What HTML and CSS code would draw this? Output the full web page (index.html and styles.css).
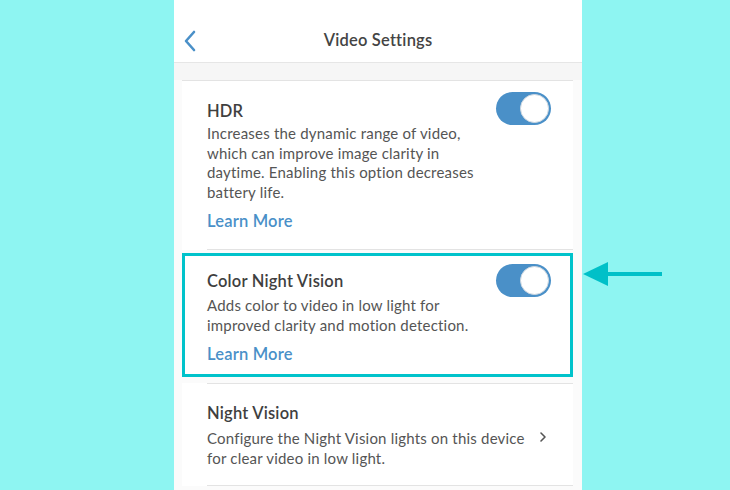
FILE: index.html
```html
<!DOCTYPE html>
<html>
<head>
<meta charset="utf-8">
<link rel="stylesheet" href="styles.css">
</head>
<body>
<div class="stage">
  <div class="panel">
    <div class="header">
      <svg class="back" width="14" height="22" viewBox="0 0 14 22"><path d="M11 2 L3 11 L11 20" fill="none" stroke="#4a90c8" stroke-width="2.6" stroke-linecap="round" stroke-linejoin="round"/></svg>
      <div class="title">Video Settings</div>
    </div>
    <div class="band"></div>
    <div class="item first">
      <div class="text">
        <div class="name">HDR</div>
        <div class="desc">Increases the dynamic range of video, which can improve image clarity in daytime. Enabling this option decreases battery life.</div>
        <div class="link">Learn More</div>
      </div>
      <div class="toggle"><div class="knob"></div></div>
    </div>
    <div class="item boxed">
      <div class="text">
        <div class="name">Color Night Vision</div>
        <div class="desc">Adds color to video in low light for improved clarity and motion detection.</div>
        <div class="link">Learn More</div>
      </div>
      <div class="toggle"><div class="knob"></div></div>
    </div>
    <div class="item last">
      <div class="text">
        <div class="name">Night Vision</div>
        <div class="desc">Configure the Night Vision lights on this device for clear video in low light.</div>
      </div>
      <svg class="chev" width="8" height="12" viewBox="0 0 8 12"><path d="M2 2 L6 6 L2 10" fill="none" stroke="#555" stroke-width="1.6" stroke-linecap="round" stroke-linejoin="round"/></svg>
    </div>
  </div>
  <svg class="arrow" width="82" height="26" viewBox="0 0 82 26"><path d="M25 0 L0 12 L25 24 Z" fill="#00c0c8"/><rect x="22" y="10" width="57" height="4" fill="#00c0c8"/></svg>
</div>
</body>
</html>
```
FILE: styles.css
```css
* { box-sizing: border-box; }
html, body { margin: 0; padding: 0; }
body {
  background: #8ef5f2;
  font-family: Lato, "Open Sans", sans-serif;
  width: 730px;
  height: 490px;
  overflow: hidden;
}
.stage { position: relative; width: 730px; height: 490px; }
.panel {
  margin-left: 174px;
  width: 408px;
  height: 490px;
  background: #fbfbfb;
}
.header {
  height: 63px;
  background: #fff;
  border-bottom: 1px solid #e6e6e6;
  position: relative;
  display: flex;
  align-items: center;
  justify-content: center;
  padding-top: 18px;
}
.back { position: absolute; left: 9px; top: 30px; }
.title {
  font-size: 16.5px;
  font-weight: 600;
  color: #444;
  letter-spacing: 0.2px;
}
.band { height: 17px; background: #f6f6f6; }
.item {
  display: flex;
  background: #fff;
  margin: 0 9px 0 8px;
}
.item .text { flex: 1; margin-right: 10px; }
.name { font-size: 16.5px; font-weight: 600; color: #3f3f3f; line-height: 21px; letter-spacing: 0.2px; }
.desc { font-size: 15px; color: #555; line-height: 19.5px; margin-top: 2px; letter-spacing: 0.2px; }
.link { font-size: 16.5px; font-weight: 600; color: #4a90c8; line-height: 20px; margin-top: 9px; letter-spacing: 0.2px; }
.first {
  border-top: 1px solid #e3e3e3;
  padding: 20px 22px 19px 25px;
  background-image: linear-gradient(#e3e3e3, #e3e3e3);
  background-repeat: no-repeat;
  background-size: calc(100% - 25px) 1px;
  background-position: right bottom;
}
.toggle {
  width: 55px;
  height: 33px;
  border-radius: 17px;
  background: #4a90c8;
  position: relative;
  margin-top: -9px;
  flex: none;
}
.knob {
  position: absolute;
  right: 2px;
  top: 2px;
  width: 29px;
  height: 29px;
  border-radius: 50%;
  background: #fff;
  border: 1px solid #cfd8e0;
}
.boxed {
  margin-top: 3px;
  border: 3px solid #00c3cb;
  padding: 15px 19px 10px 22px;
}
.boxed .desc { margin-top: 4px; }
.boxed .toggle { margin-top: -7px; }
.last {
  margin-top: 6px;
  padding: 20px 26px 18px 25px;
  align-items: center;
  background-color: #fff;
  background-image: linear-gradient(#e3e3e3, #e3e3e3), linear-gradient(#e3e3e3, #e3e3e3);
  background-repeat: no-repeat;
  background-size: calc(100% - 25px) 1px, calc(100% - 25px) 1px;
  background-position: right top, right bottom;
}
.last .desc { margin-top: 5px; }
.last .text { margin-right: 4px; }
.last .chev { margin-top: 2px; flex: none; }
.arrow { position: absolute; left: 583px; top: 262px; }
```
